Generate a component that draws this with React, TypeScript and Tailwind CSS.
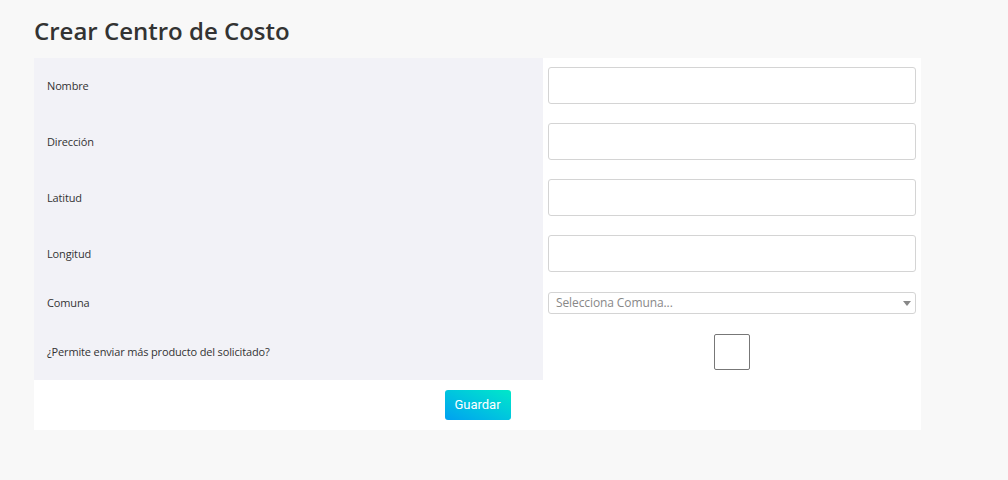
import React from "react";

const fields = ["Nombre", "Dirección", "Latitud", "Longitud"];

export default function App() {
  return (
    <div
      className="min-h-[480px] w-[1008px] bg-[#f8f8f8] pl-[34px] pt-[14px]"
      style={{ fontFamily: '"Open Sans", "Liberation Sans", sans-serif' }}
    >
      <h1 className="text-[24px] leading-[34px] font-semibold text-[#333] mb-[10px]">
        Crear Centro de Costo
      </h1>

      <div className="w-[887px] bg-white">
        <table className="w-full border-collapse">
          <tbody>
            {fields.map((f) => (
              <tr key={f} className="h-[56px]">
                <td className="w-[509px] bg-[#f2f2f7] pl-[13px] text-[11px] tracking-[-0.15px] text-[#333] align-middle">
                  {f}
                </td>
                <td className="px-[5px] pt-[9px] pb-[10px] align-top">
                  <input
                    type="text"
                    className="block w-full h-[37px] rounded-[3px] border border-[#d4d4d4] bg-white"
                  />
                </td>
              </tr>
            ))}
            <tr className="h-[42px]">
              <td className="bg-[#f2f2f7] pl-[13px] text-[11px] tracking-[-0.15px] text-[#333] align-middle">
                Comuna
              </td>
              <td className="px-[5px] align-middle">
                <div className="flex h-[22px] items-center justify-between rounded-[3px] border border-[#d4d4d4] bg-white pl-[7px] pr-[4px]">
                  <span className="text-[12px] tracking-[-0.1px] text-[#888]">Selecciona Comuna...</span>
                  <span className="block h-0 w-0 border-x-[4px] border-t-[5px] border-x-transparent border-t-[#888]" />
                </div>
              </td>
            </tr>
            <tr className="h-[56px]">
              <td className="bg-[#f2f2f7] pl-[13px] text-[11px] tracking-[-0.15px] text-[#333] align-middle">
                ¿Permite enviar más producto del solicitado?
              </td>
              <td className="align-middle">
                <div className="flex justify-center">
                  <div className="h-[36px] w-[36px] rounded-[2px] border border-[#777] bg-white" />
                </div>
              </td>
            </tr>
          </tbody>
        </table>
        <div className="flex h-[50px] items-center justify-center">
          <button
            className="h-[30px] w-[66px] rounded-[3px] bg-gradient-to-tr from-[#00a0f0] to-[#00e8c8] text-[13px] text-white"
            style={{ fontFamily: 'Roboto, "Liberation Sans", sans-serif' }}
          >
            Guardar
          </button>
        </div>
      </div>
    </div>
  );
}
